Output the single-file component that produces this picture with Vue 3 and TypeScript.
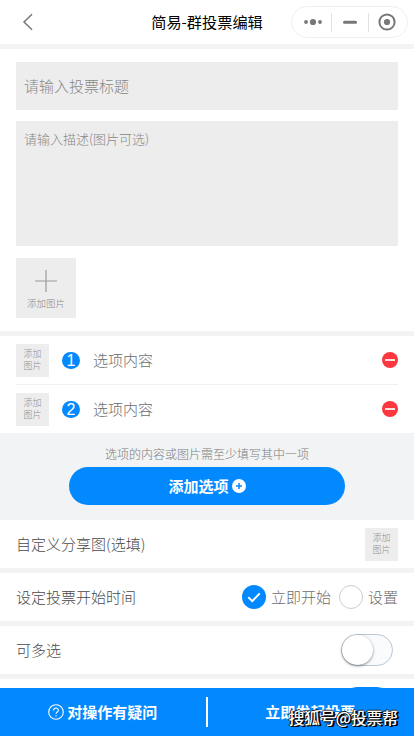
<script setup lang="ts">
import { ref } from 'vue'

interface VoteOption {
  id: number
  text: string
}

const title = ref('')
const description = ref('')
const options = ref<VoteOption[]>([
  { id: 1, text: '' },
  { id: 2, text: '' },
])
const startMode = ref<'now' | 'custom'>('now')
const multiple = ref(false)

let nextId = 3
function addOption(): void {
  options.value.push({ id: nextId++, text: '' })
}
function removeOption(id: number): void {
  options.value = options.value.filter((o) => o.id !== id)
}
</script>

<template>
  <div class="page">
    <header class="nav">
      <svg class="back" viewBox="0 0 12 18" width="12" height="18"><path d="M10 1.2 2 9l8 7.8" /></svg>
      <h1>简易-群投票编辑</h1>
      <div class="capsule">
        <span class="cell">
          <svg viewBox="0 0 20 20" width="20" height="20">
            <circle cx="3" cy="10" r="1.9" /><circle cx="10" cy="10" r="3.1" /><circle cx="17" cy="10" r="1.9" />
          </svg>
        </span>
        <span class="cell mid">
          <svg viewBox="0 0 14 4" width="14" height="4"><rect width="14" height="3" y=".8" rx="1.5" /></svg>
        </span>
        <span class="cell">
          <svg viewBox="0 0 18 18" width="18" height="18">
            <circle cx="9" cy="9" r="7.6" class="ring" /><circle cx="9" cy="9" r="3.1" />
          </svg>
        </span>
      </div>
    </header>

    <main>
      <section class="intro">
        <input v-model="title" class="title" placeholder="请输入投票标题" />
        <textarea v-model="description" class="desc" placeholder="请输入描述(图片可选)"></textarea>
        <button class="upload">
          <svg viewBox="0 0 22 22" width="22" height="22"><path d="M11 0v22M0 11h22" /></svg>
          <span>添加图片</span>
        </button>
      </section>

      <section class="options">
        <div v-for="(option, index) in options" :key="option.id" class="option">
          <button class="thumb">添加<br />图片</button>
          <b class="num">{{ index + 1 }}</b>
          <input v-model="option.text" placeholder="选项内容" />
          <button class="remove" @click="removeOption(option.id)">
            <svg viewBox="0 0 16 16" width="16" height="16"><circle cx="8" cy="8" r="8" /><path d="M3 8h10" /></svg>
          </button>
        </div>
      </section>

      <section class="more">
        <p>选项的内容或图片需至少填写其中一项</p>
        <button class="add" @click="addOption">
          添加选项
          <svg viewBox="0 0 14 14" width="14" height="14"><circle cx="7" cy="7" r="7" /><path d="M7 4v6M4 7h6" /></svg>
        </button>
      </section>

      <section class="row">
        <span>自定义分享图(选填)</span>
        <button class="thumb">添加<br />图片</button>
      </section>
      <section class="row">
        <span>设定投票开始时间</span>
        <div class="radios">
          <label @click="startMode = 'now'">
            <i class="radio" :class="{ on: startMode === 'now' }">
              <svg viewBox="0 0 24 24" width="24" height="24"><path d="m6.3 12.3 4 3.8 7.4-7.7" /></svg>
            </i>立即开始
          </label>
          <label @click="startMode = 'custom'">
            <i class="radio" :class="{ on: startMode === 'custom' }">
              <svg viewBox="0 0 24 24" width="24" height="24"><path d="m6.3 12.3 4 3.8 7.4-7.7" /></svg>
            </i>设置
          </label>
        </div>
      </section>
      <section class="row">
        <span>可多选</span>
        <button class="switch" :class="{ on: multiple }" @click="multiple = !multiple"></button>
      </section>
      <section class="row">
        <span></span>
        <button class="switch on"></button>
      </section>
    </main>

    <footer class="bar">
      <button class="help">
        <svg viewBox="0 0 16 16" width="16" height="16">
          <circle cx="8" cy="8" r="7.3" /><path d="M5.6 6.4C5.6 3.3 10.4 3.3 10.4 6.2 10.4 7.9 8 8 8 9.8M8 11.3v1.2" />
        </svg>
        对操作有疑问
      </button>
      <i class="divider"></i>
      <button class="submit">立即发起投票</button>
      <span class="watermark">搜狐号@投票帮</span>
    </footer>
  </div>
</template>

<style>
body {
  margin: 0;
  overflow: hidden;
}
</style>

<style scoped>
.page {
  display: flex;
  flex-direction: column;
  width: 100%;
  height: 736px;
  overflow: hidden;
  background: #fff;
  color: #4a4a4a;
  font: 300 15px/20px "Noto Sans CJK SC", sans-serif;
}
.page * {
  box-sizing: border-box;
}
button,
input,
textarea {
  display: block;
  margin: 0;
  padding: 0;
  border: 0;
  border-radius: 0;
  outline: 0;
  background: none;
  color: inherit;
  font: inherit;
}
svg {
  display: block;
  flex: none;
}
.nav {
  position: relative;
  display: flex;
  align-items: center;
  justify-content: space-between;
  flex: none;
  height: 44px;
  padding: 0 6px 0 22px;
}
.back {
  fill: none;
  stroke: #777;
  stroke-width: 1.5;
}
.nav h1 {
  position: absolute;
  left: 0;
  right: 0;
  margin: 0 0 2px;
  color: #000;
  font-size: 15.2px;
  font-weight: 400;
  line-height: 20px;
  text-align: center;
}
.capsule {
  display: flex;
  align-items: center;
  width: 117px;
  height: 32px;
  padding: 0 2px 0 3px;
  border: 1px solid #f0f0f0;
  border-radius: 16px;
  fill: #777;
}
.cell {
  display: flex;
  align-items: center;
  justify-content: center;
  flex: 1;
  height: 19px;
}
.cell.mid {
  flex: 0 0 38px;
  border: solid #e2e2e2;
  border-width: 0 1px;
}
.ring {
  fill: none;
  stroke: #777;
  stroke-width: 2;
}
main {
  flex: 1;
  min-height: 0;
  overflow: hidden;
}
.intro {
  display: flex;
  flex-direction: column;
  height: 292px;
  padding: 13px 16px;
  border-top: 5px solid #f3f3f3;
  border-bottom: 5px solid #f3f3f3;
}
.title {
  width: 100%;
  height: 48px;
  padding: 0 8px 2px;
  background: #ededed;
}
.desc {
  width: 100%;
  height: 125px;
  margin: 11px 0 12px;
  padding: 8px;
  background: #ededed;
  resize: none;
  font-size: 13px;
}
.title::placeholder,
.desc::placeholder {
  color: #888;
  opacity: 1;
}
.upload {
  display: flex;
  flex-direction: column;
  align-items: center;
  width: 60px;
  height: 60px;
  padding-top: 12px;
  background: #ededed;
  color: #888;
  font-size: 9.5px;
  line-height: 22px;
}
.upload svg {
  fill: none;
  stroke: #999;
  stroke-width: 1.2;
}
.options {
  height: 97px;
  padding: 0 16px;
}
.option {
  display: flex;
  align-items: center;
  height: 48px;
}
.option + .option {
  height: 49px;
  border-top: 1px solid #f0f0f0;
}
.thumb {
  width: 33px;
  height: 33px;
  background: #ededed;
  color: #909090;
  font-size: 9px;
  line-height: 12px;
}
.num {
  width: 18px;
  height: 17px;
  margin: 0 13px;
  border-radius: 9px;
  background: #0389ff;
  color: #fff;
  font: 400 16px/17px "Liberation Sans", sans-serif;
  text-align: center;
}
.option input {
  flex: 1;
  min-width: 0;
}
.option input::placeholder {
  color: #6c6c6c;
  opacity: 1;
}
.remove circle {
  fill: #fb373f;
}
.remove path {
  stroke: #ffdfe0;
  stroke-width: 2;
}
.more {
  display: flex;
  flex-direction: column;
  align-items: center;
  height: 87px;
  padding-top: 11px;
  background: #f1f3f5;
}
.more p {
  margin: 0 0 3px;
  color: #7c7c7c;
  font-size: 12px;
  line-height: 20px;
}
.add {
  display: flex;
  align-items: center;
  justify-content: center;
  gap: 3px;
  width: 276px;
  height: 38px;
  border-radius: 19px;
  background: #0389ff;
  color: #fff;
  font-weight: 700;
}
.add circle {
  fill: #fff;
}
.add path {
  stroke: #0389ff;
  stroke-width: 1.5;
}
.row {
  display: flex;
  align-items: center;
  justify-content: space-between;
  height: 53px;
  padding: 0 16px;
  border-bottom: 5px solid #f3f3f3;
}
.radios {
  display: flex;
  gap: 8px;
  color: #6c6c6c;
}
.radios label {
  display: flex;
  align-items: center;
  gap: 5px;
}
.radio {
  width: 24px;
  height: 24px;
  border: 1px solid #ccc;
  border-radius: 50%;
}
.radio svg {
  display: none;
  fill: none;
  stroke: #fff;
  stroke-width: 2;
}
.radio.on {
  border: 0;
  background: #0389ff;
}
.radio.on svg {
  display: block;
}
.switch {
  display: flex;
  width: 52px;
  height: 32px;
  margin-right: 5px;
  border: 1px solid #bac8d7;
  border-radius: 16px;
  background: #fafbfd;
}
.switch::before {
  content: "";
  width: 31px;
  height: 30px;
  border-radius: 50%;
  background: #fff;
  box-shadow: 0 1px 3px rgba(0, 0, 0, 0.45);
}
.switch.on {
  justify-content: flex-end;
  border-color: #0389ff;
  background: #0389ff;
}
.switch.on::before {
  box-shadow: none;
}
.bar {
  position: relative;
  display: flex;
  align-items: center;
  flex: none;
  height: 48px;
  background: #0389ff;
  color: #fff;
  font-weight: 700;
}
.help,
.submit {
  display: flex;
  align-items: center;
  justify-content: center;
  flex: 1;
  gap: 3px;
  height: 100%;
}
.submit {
  padding-right: 1px;
}
.help svg {
  fill: none;
  stroke: #fff;
  stroke-width: 1.1;
}
.divider {
  width: 2px;
  height: 30px;
  background: #fff;
}
.watermark {
  position: absolute;
  right: 16px;
  bottom: 8px;
  font-size: 15.7px;
  font-weight: 500;
  white-space: nowrap;
  text-shadow: 1px 1px 0 #000, 2px 1px 0 #000, -1px 0 0 #222, 0 -1px 0 #222;
}
</style>
